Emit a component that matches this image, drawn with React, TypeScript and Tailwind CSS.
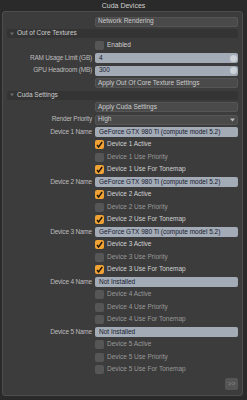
import type { ReactNode } from "react";

function Check({ on, label, dim }: { on?: boolean; label: string; dim?: boolean }) {
	return (
		<div className="flex h-[10px] items-center gap-[3px] pl-[88px]">
			<div
				className={
					on
						? "flex h-[9px] w-[9px] items-center justify-center rounded-[2px] bg-[#f0a235]"
						: "h-[9px] w-[9px] rounded-[2px] bg-[#565656]"
				}
			>
				{on && (
					<svg width="7" height="7" viewBox="0 0 7 7">
						<path d="M1 4 L2.6 6 L6.2 1" fill="none" stroke="#1c1409" strokeWidth="1.4" />
					</svg>
				)}
			</div>
			<span className={dim ? "text-[#9a9a9a]" : "text-[#d2d2d2]"}>{label}</span>
		</div>
	);
}

function Row({ label, children }: { label: string; children: ReactNode }) {
	return (
		<div className="flex h-[10px] items-center">
			<span className="w-[85px] text-right tracking-[-0.2px] text-[#bdbdbd]">{label}</span>
			<div className="ml-[3px] h-full flex-1">{children}</div>
		</div>
	);
}

function Button({ text }: { text: string }) {
	return (
		<div className="flex h-[10px] items-center pl-[88px]">
			<div className="flex h-full flex-1 items-center rounded-[2px] border border-[#555555] bg-[#4a4a4a] px-[2px] text-[#cccccc]">
				{text}
			</div>
		</div>
	);
}

function Field({ value, spin }: { value: string; spin?: boolean }) {
	return (
		<div className="flex h-full items-center rounded-[2px] bg-[#a3abb6] pl-[4px] pr-[1px] text-[#18202f]">
			<span className="flex-1">{value}</span>
			{spin && <div className="h-[7px] w-[7px] rounded-full bg-[#cdd2d8]" />}
		</div>
	);
}

function Header({ text }: { text: string }) {
	return (
		<div className="flex h-[9px] items-center gap-[3px] rounded-[2px] bg-[#343434] pl-[3px] text-[#cccccc]">
			<svg width="4" height="4" viewBox="0 0 4 4">
				<path d="M0 0.5 L4 0.5 L2 3.5 Z" fill="#6a6a6a" />
			</svg>
			{text}
		</div>
	);
}

export default function App() {
	const devices = [1, 2, 3, 4, 5];
	return (
		<div className="h-[400px] w-[247px] bg-[#2a2a2a] font-['Liberation_Sans',sans-serif] text-[6.5px] leading-none">
			<div className="flex h-[11px] items-center justify-center text-[7px] text-[#cfcfcf]">Cuda Devices</div>
			<div className="ml-[2px] h-[385px] w-[241px] rounded-[3px] border border-[#4e4e4e] bg-[#3c3c3c] px-[4px] pt-[4.5px]">
				<div className="flex flex-col gap-[2.5px]">
					<Button text="Network Rendering" />
					<Header text="Out of Core Textures" />
					<Check label="Enabled" />
					<Row label="RAM Usage Limit (GB)">
						<Field value="4" spin />
					</Row>
					<Row label="GPU Headroom (MB)">
						<Field value="300" spin />
					</Row>
					<Button text="Apply Out Of Core Texture Settings" />
					<Header text="Cuda Settings" />
					<Button text="Apply Cuda Settings" />
					<Row label="Render Priority">
						<div className="flex h-full items-center rounded-[2px] border border-[#555555] bg-[#4a4a4a] px-[2px] text-[#cccccc]">
							<span className="flex-1">High</span>
							<svg width="5" height="4" viewBox="0 0 5 4">
								<path d="M0 0.5 L5 0.5 L2.5 3.5 Z" fill="#bdbdbd" />
							</svg>
						</div>
					</Row>
					{devices.map((n) => {
						const installed = n <= 3;
						return (
							<div key={n} className="flex flex-col gap-[2.5px]">
								<Row label={`Device ${n} Name`}>
									<Field value={installed ? "GeForce GTX 980 Ti (compute model 5.2)" : "Not Installed"} />
								</Row>
								<Check on={installed} label={`Device ${n} Active`} dim={!installed} />
								<Check label={`Device ${n} Use Priority`} dim />
								<Check on={installed} label={`Device ${n} Use For Tonemap`} dim={!installed} />
							</div>
						);
					})}
				</div>
				<div className="mt-[3.5px] flex justify-end">
					<div className="flex h-[12px] w-[13px] items-center justify-center rounded-[2px] bg-[#555555] text-[#8a8a8a]">
						&gt;&gt;
					</div>
				</div>
			</div>
		</div>
	);
}
